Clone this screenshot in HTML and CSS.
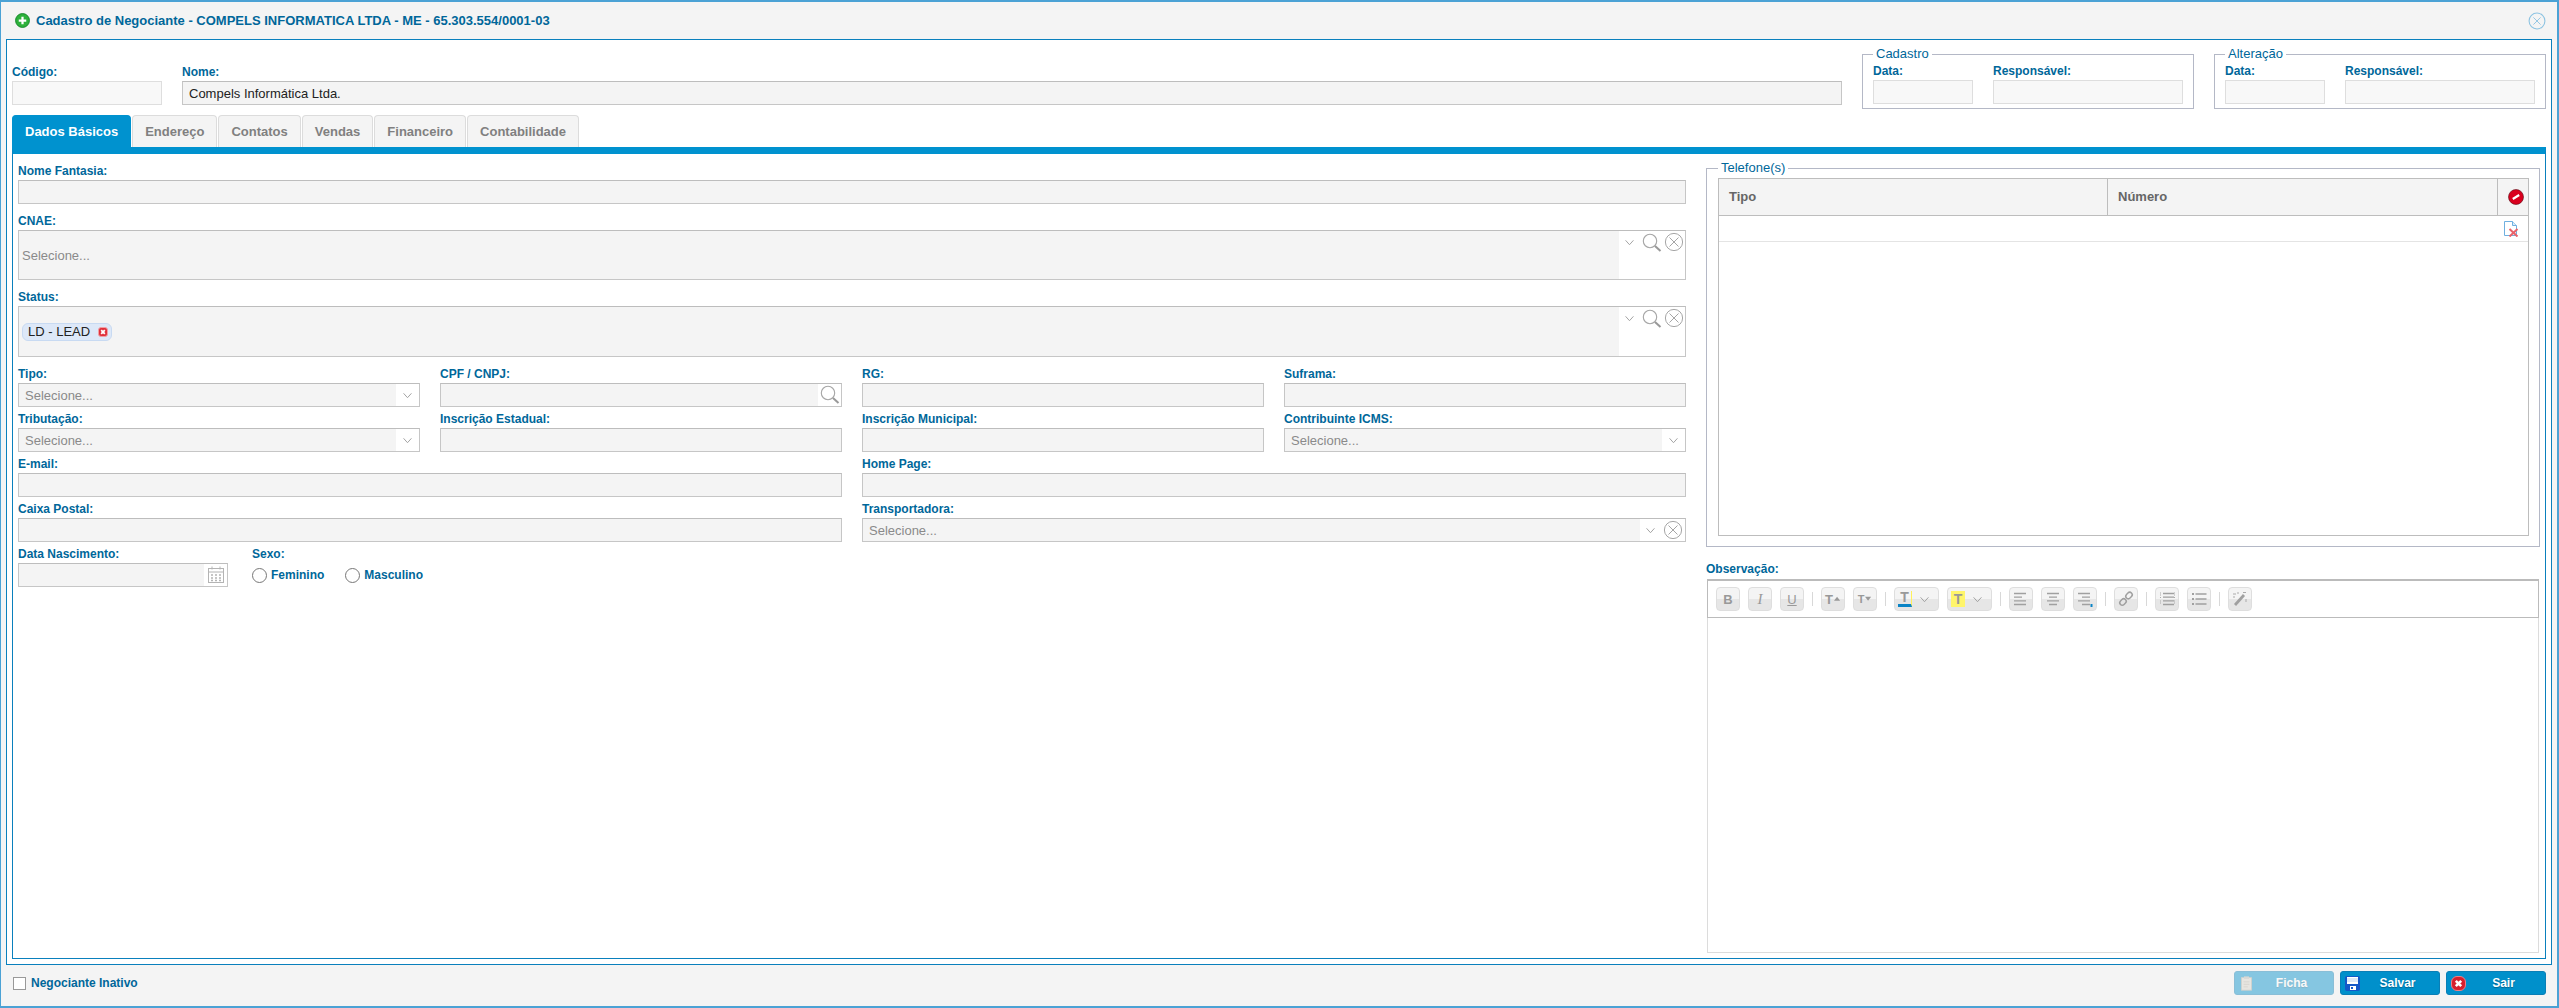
FILE: index.html
```html
<!DOCTYPE html>
<html lang="pt-BR">
<head>
  <meta charset="UTF-8">
  <meta name="viewport" content="width=device-width, initial-scale=1.0">
  <title>Cadastro de Negociante</title>
  <link rel="stylesheet" href="styles.css">
</head>
<body>
  <svg class="sprite" width="0" height="0">
    <symbol id="seta" viewBox="0 0 12 8"><path d="M1.500 1.500 6 6.500l4.500-5" fill="none" stroke="#a0a0a0" stroke-width="1.100"/></symbol>
    <symbol id="lupa" viewBox="0 0 20 20"><circle cx="8" cy="8" r="6.700" fill="none" stroke="#a6a6a6" stroke-width="1.100"/><path d="m13 13 5.500 5" stroke="#999" stroke-width="2"/></symbol>
    <symbol id="fechar" viewBox="0 0 20 20"><circle cx="10" cy="10" r="8.600" fill="none" stroke="#a6a6a6" stroke-width="1"/><path d="m5.500 5.500 9 9m0-9-9 9" stroke="#a6a6a6" stroke-width="1"/></symbol>
    <symbol id="parar" viewBox="0 0 16 16"><circle cx="8" cy="8" r="7.500" fill="#d9001e" stroke="#5c0a14" stroke-width=".6"/><path d="m4.800 10 6.400-4" stroke="#fff" stroke-width="2.200"/></symbol>
    <symbol id="sair" viewBox="0 0 15 15"><rect x=".5" y=".5" width="14" height="14" rx="5.500" fill="#d5202e" stroke="#ef7f86"/><path d="m4.800 4.800 5.400 5.400m0-5.400-5.400 5.400" stroke="#fff" stroke-width="2.600"/></symbol>
  </svg>

  <div class="janela">
    <div class="titulo">
      <svg class="icone-titulo" viewBox="0 0 16 16"><circle cx="8" cy="8" r="7.400" fill="#2db13a" stroke="#14862a"/><path d="M8 4v8M4 8h8" stroke="#fff" stroke-width="2.400"/></svg>
      <span>Cadastro de Negociante - COMPELS INFORMATICA LTDA - ME - 65.303.554/0001-03</span>
      <svg class="fechar-janela" viewBox="0 0 20 20"><circle cx="10" cy="10" r="8.800" fill="none" stroke="#8cc3e2" stroke-width="1.200"/><path d="m6 6 8 8m0-8-8 8" stroke="#8cc3e2" stroke-width="1"/></svg>
    </div>

    <div class="conteudo">
      <div class="topo">
        <div class="campo codigo">
          <label class="rotulo">Código:</label>
          <div class="entrada vazia"></div>
        </div>
        <div class="campo nome">
          <label class="rotulo">Nome:</label>
          <div class="entrada"><span class="valor">Compels Informática Ltda.</span></div>
        </div>
        <fieldset class="grupo auditoria">
          <legend>Cadastro</legend>
          <div class="campo data"><label class="rotulo">Data:</label><div class="entrada vazia"></div></div>
          <div class="campo responsavel"><label class="rotulo">Responsável:</label><div class="entrada vazia"></div></div>
        </fieldset>
        <fieldset class="grupo auditoria">
          <legend>Alteração</legend>
          <div class="campo data"><label class="rotulo">Data:</label><div class="entrada vazia"></div></div>
          <div class="campo responsavel"><label class="rotulo">Responsável:</label><div class="entrada vazia"></div></div>
        </fieldset>
      </div>

      <div class="abas">
        <div class="aba ativa">Dados Básicos</div>
        <div class="aba">Endereço</div>
        <div class="aba">Contatos</div>
        <div class="aba">Vendas</div>
        <div class="aba">Financeiro</div>
        <div class="aba">Contabilidade</div>
      </div>

      <div class="painel">
        <div class="coluna-esq">
          <div class="campo largo">
            <label class="rotulo">Nome Fantasia:</label>
            <div class="entrada"></div>
          </div>
          <div class="campo largo">
            <label class="rotulo">CNAE:</label>
            <div class="entrada multipla">
              <span class="valor placeholder">Selecione...</span>
              <span class="botoes">
                <svg class="ic-seta"><use href="#seta"/></svg>
                <svg class="ic-lupa"><use href="#lupa"/></svg>
                <svg class="ic-fechar"><use href="#fechar"/></svg>
              </span>
            </div>
          </div>
          <div class="campo largo">
            <label class="rotulo">Status:</label>
            <div class="entrada multipla status">
              <span class="etiqueta">LD - LEAD
                <svg class="etiqueta-x" viewBox="0 0 10 10"><rect x=".5" y=".5" width="9" height="9" rx="2.500" fill="#e0303c" stroke="#f0a0a4"/><path d="m3.200 3.200 3.600 3.600m0-3.600-3.600 3.600" stroke="#fff" stroke-width="1.800"/></svg>
              </span>
              <span class="botoes">
                <svg class="ic-seta"><use href="#seta"/></svg>
                <svg class="ic-lupa"><use href="#lupa"/></svg>
                <svg class="ic-fechar"><use href="#fechar"/></svg>
              </span>
            </div>
          </div>

          <div class="grade">
            <div class="campo">
              <label class="rotulo">Tipo:</label>
              <div class="entrada"><span class="valor placeholder recuo">Selecione...</span><span class="botoes uma"><svg class="ic-seta"><use href="#seta"/></svg></span></div>
            </div>
            <div class="campo">
              <label class="rotulo">CPF / CNPJ:</label>
              <div class="entrada"><span class="valor"></span><span class="botoes uma"><svg class="ic-lupa"><use href="#lupa"/></svg></span></div>
            </div>
            <div class="campo">
              <label class="rotulo">RG:</label>
              <div class="entrada"></div>
            </div>
            <div class="campo">
              <label class="rotulo">Suframa:</label>
              <div class="entrada"></div>
            </div>

            <div class="campo">
              <label class="rotulo">Tributação:</label>
              <div class="entrada"><span class="valor placeholder recuo">Selecione...</span><span class="botoes uma"><svg class="ic-seta"><use href="#seta"/></svg></span></div>
            </div>
            <div class="campo">
              <label class="rotulo">Inscrição Estadual:</label>
              <div class="entrada"></div>
            </div>
            <div class="campo">
              <label class="rotulo">Inscrição Municipal:</label>
              <div class="entrada"></div>
            </div>
            <div class="campo">
              <label class="rotulo">Contribuinte ICMS:</label>
              <div class="entrada"><span class="valor placeholder recuo">Selecione...</span><span class="botoes uma"><svg class="ic-seta"><use href="#seta"/></svg></span></div>
            </div>

            <div class="campo dupla">
              <label class="rotulo">E-mail:</label>
              <div class="entrada"></div>
            </div>
            <div class="campo dupla">
              <label class="rotulo">Home Page:</label>
              <div class="entrada"></div>
            </div>

            <div class="campo dupla">
              <label class="rotulo">Caixa Postal:</label>
              <div class="entrada"></div>
            </div>
            <div class="campo dupla">
              <label class="rotulo">Transportadora:</label>
              <div class="entrada"><span class="valor placeholder recuo">Selecione...</span><span class="botoes duas"><svg class="ic-seta"><use href="#seta"/></svg><svg class="ic-fechar"><use href="#fechar"/></svg></span></div>
            </div>
          </div>

          <div class="linha-final">
            <div class="campo nascimento">
              <label class="rotulo">Data Nascimento:</label>
              <div class="entrada">
                <span class="valor"></span>
                <span class="botoes uma">
                  <svg class="ic-calendario" viewBox="0 0 18 18" fill="none" stroke="#b4b4b4"><rect x="1.500" y="2.500" width="15" height="14"/><path d="M1.500 6h15M5 .5v3M13 .5v3"/><path d="M4 9h2M8 9h2M12 9h2M4 12h2M8 12h2M12 12h2M4 14.500h2M8 14.500h2M12 14.500h2" stroke-width="1.500"/></svg>
                </span>
              </div>
            </div>
            <div class="campo sexo">
              <label class="rotulo">Sexo:</label>
              <div class="opcoes">
                <label class="opcao"><input type="radio" name="sexo">Feminino</label>
                <label class="opcao"><input type="radio" name="sexo">Masculino</label>
              </div>
            </div>
          </div>
        </div>

        <div class="coluna-dir">
          <fieldset class="grupo telefones">
            <legend>Telefone(s)</legend>
            <div class="tabela">
              <div class="tabela-cab">
                <div class="col-tipo">Tipo</div>
                <div class="col-numero">Número</div>
                <div class="col-acao"><svg class="ic-parar"><use href="#parar"/></svg></div>
              </div>
              <div class="tabela-linha">
                <svg class="ic-doc" viewBox="0 0 16 16"><path d="M1.500 .5h8l4 4v10h-12z" fill="#fff" stroke="#6fb0e0"/><path d="M9.500 .5v4h4" fill="#d8ecfa" stroke="#6fb0e0"/><path d="m6.500 8 8 7.500m0-7.500-8 7.500" stroke="#e8626a" stroke-width="2"/></svg>
              </div>
            </div>
          </fieldset>

          <label class="rotulo obs">Observação:</label>
          <div class="editor">
            <div class="barra">
              <span class="bt"><b>B</b></span>
              <span class="bt"><i class="serifa">I</i></span>
              <span class="bt"><u>U</u></span>
              <span class="sep"></span>
              <span class="bt"><b>T</b><svg class="mini" viewBox="0 0 8 6"><path d="M0 5h7L3.500 .5z" fill="#999"/></svg></span>
              <span class="bt"><b class="menor">T</b><svg class="mini" viewBox="0 0 8 6"><path d="M0 .5h7L3.500 5z" fill="#999"/></svg></span>
              <span class="sep"></span>
              <span class="bt duplo"><span class="cor-texto"><b>T</b></span><svg class="ic-seta"><use href="#seta"/></svg></span>
              <span class="bt duplo"><span class="cor-fundo"><b>T</b></span><svg class="ic-seta"><use href="#seta"/></svg></span>
              <span class="sep"></span>
              <span class="bt"><svg class="ic-barra" viewBox="0 0 14 14"><path d="M0 1.500h12M0 5.200h8M0 8.900h12M0 12.500h12" stroke="#a0a0a0" stroke-width="1.300"/></svg></span>
              <span class="bt"><svg class="ic-barra" viewBox="0 0 14 14"><path d="M1 1.500h12M3 5.200h8M1 8.900h12M3 12.500h8" stroke="#a0a0a0" stroke-width="1.300"/></svg></span>
              <span class="bt"><svg class="ic-barra" viewBox="0 0 14 14"><path d="M0 1.500h12M4 5.200h8M0 8.900h12M4 12.500h8" stroke="#a0a0a0" stroke-width="1.300"/><path d="M12.500 12h2v3h-2z" fill="#0a84c6"/></svg></span>
              <span class="sep"></span>
              <span class="bt"><svg class="ic-barra" viewBox="0 0 14 14" fill="none" stroke="#a0a0a0" stroke-width="1.500"><rect x="6.500" y="1" width="7" height="5" rx="2.500" transform="rotate(-45 10 3.500)"/><rect x=".5" y="7.500" width="7" height="5" rx="2.500" transform="rotate(-45 4 10)"/></svg></span>
              <span class="sep"></span>
              <span class="bt"><svg class="ic-lista" viewBox="0 0 15 14"><path d="M3 1.500h11M3 5.200h11M3 8.900h11M3 12.500h11" stroke="#a0a0a0" stroke-width="1.300"/><path d="M.5 .5v3M.5 5v2M.5 8.500v4M14.500 .5v3M14.500 5v2M14.500 8.500v4" stroke="#aaa" stroke-dasharray="1 1"/></svg></span>
              <span class="bt"><svg class="ic-lista" viewBox="0 0 15 14"><path d="M3.500 2h11M3.500 7h11M3.500 12h11" stroke="#a0a0a0" stroke-width="1.300"/><path d="M0 1h2v2H0zM0 6h2v2H0zM0 11h2v2H0z" fill="#a0a0a0"/></svg></span>
              <span class="sep"></span>
              <span class="bt"><svg class="ic-lista" viewBox="0 0 15 14"><path d="m2 13 9-10" stroke="#a0a0a0" stroke-width="2.800"/><path d="M0 2h3M5 0v2M10 .5h3M0 5h2M13 7v3" stroke="#aaa"/></svg></span>
            </div>
          </div>
        </div>
      </div>
    </div>

    <div class="rodape">
      <label class="inativo"><input type="checkbox">Negociante Inativo</label>
      <div class="acoes">
        <button class="botao desabilitado" type="button">
          <svg viewBox="0 0 14 18"><rect x="1" y="2" width="12" height="15" fill="#d8d4c8" stroke="#a8a89c"/><rect x="4" y=".5" width="6" height="3" fill="#b8b8b0"/><path d="M3.500 7h7M3.500 10h7M3.500 13h5" stroke="#b0aca0"/></svg>
          <span>Ficha</span>
        </button>
        <button class="botao" type="button">
          <svg viewBox="0 0 15 15"><rect width="15" height="15" rx="2" fill="#1458c8"/><rect x="2" y="1" width="11" height="7" fill="#fff"/><path d="M2 3h11M2 5h11" stroke="#bcd0ee"/><rect x="5" y="10" width="6" height="4" fill="#fff"/><rect x="6" y="11" width="2" height="2" fill="#1458c8"/></svg>
          <span>Salvar</span>
        </button>
        <button class="botao" type="button">
          <svg><use href="#sair"/></svg>
          <span>Sair</span>
        </button>
      </div>
    </div>
  </div>
</body>
</html>
```

FILE: styles.css
```css
* {
  box-sizing: border-box;
}

body {
  margin: 0;
  padding: 0;
  background: white;
  font-family: "Liberation Sans", Arial, sans-serif;
  font-size: 12px;
  overflow: hidden;
}

.sprite {
  position: absolute;
}

.janela {
  display: flex;
  flex-direction: column;
  height: 100vh;
  background: #f4f4f4;
  border: 2px solid #4ba2d5;
  border-left-width: 1px;
}

.titulo {
  display: flex;
  align-items: center;
  height: 37px;
  padding: 0 11px 0 14px;
  color: #00679a;
  font-size: 13px;
  font-weight: bold;
}

.icone-titulo {
  width: 15px;
  height: 15px;
  margin-right: 6px;
}

.fechar-janela {
  width: 18px;
  height: 18px;
  margin-left: auto;
}

.conteudo {
  flex: 1;
  display: flex;
  flex-direction: column;
  margin: 0 5px;
  padding: 0 5px 5px;
  background: white;
  border: 1px solid #0a80bd;
}

/* topo */
.topo {
  display: flex;
  align-items: flex-start;
  gap: 20px;
  height: 75px;
}

.rotulo {
  display: block;
  height: 16px;
  line-height: 15px;
  color: #00679a;
  font-weight: bold;
}

.campo {
  min-width: 0;
}

.codigo {
  width: 150px;
  margin-top: 25px;
}

.nome {
  flex: 1;
  margin-top: 25px;
}

.entrada {
  display: flex;
  align-items: center;
  height: 24px;
  background: #f4f4f4;
  border: 1px solid #c6c6c6;
  border-top-color: #bdbdbd;
}

.entrada.vazia {
  background: #f8f8f8;
  border-color: #dedede;
}

.valor {
  flex: 1;
  padding-left: 6px;
  color: #222;
  font-size: 13px;
}

.placeholder {
  padding-left: 3px;
  color: #8a8a8a;
}

.placeholder.recuo {
  padding-left: 6px;
}

.grupo {
  min-width: 0;
  margin: 0;
  background: white;
  border: 1px solid #b4b8c6;
}

.grupo legend {
  height: 14px;
  padding: 0 3px;
  line-height: 14px;
  color: #00679a;
  font-size: 13px;
}

.auditoria {
  display: flex;
  gap: 20px;
  width: 332px;
  margin-top: 7px;
  padding: 3px 10px 4px;
}

.data {
  width: 100px;
}

.responsavel {
  width: 190px;
}

/* abas */
.abas {
  display: flex;
  gap: 1px;
  height: 32px;
}

.aba {
  padding: 0 12px;
  line-height: 32px;
  color: #808080;
  font-size: 13px;
  font-weight: bold;
  background: #f4f4f4;
  border: 1px solid #dcdcdc;
  border-bottom: none;
  border-radius: 4px 4px 0 0;
}

.aba.ativa {
  color: white;
  background: #0092cf;
  border-color: #0092cf;
}

.painel {
  flex: 1;
  display: flex;
  gap: 20px;
  padding: 0 5px 5px;
  border: 1px solid #0a80bd;
  border-top: 7px solid #0092cf;
}

/* coluna da esquerda */
.coluna-esq {
  width: 1668px;
  padding-top: 10px;
}

.largo {
  margin-bottom: 10px;
}

.multipla {
  height: 50px;
}

.multipla.status {
  height: 51px;
}

.botoes {
  display: flex;
  align-self: stretch;
  align-items: center;
  justify-content: flex-end;
  background: white;
  flex: none;
}

.multipla .botoes {
  width: 66px;
  align-items: flex-start;
  padding-top: 2px;
  padding-right: 1px;
}

.uma {
  width: 23px;
  justify-content: center;
}

.duas {
  justify-content: flex-start;
  width: 45px;
  gap: 5px;
  padding-left: 5px;
}

.ic-seta {
  width: 11px;
  height: 7px;
}

.multipla .ic-seta {
  margin: 6px auto 0 5px;
}

.ic-lupa {
  width: 20px;
  height: 20px;
}

.ic-fechar {
  width: 20px;
  height: 20px;
  margin-left: 2px;
}

.multipla .ic-fechar {
  margin-top: -1px;
}

.ic-calendario {
  width: 18px;
  height: 18px;
}

.etiqueta {
  display: flex;
  align-items: center;
  justify-content: space-between;
  width: 90px;
  height: 18px;
  margin-left: 3px;
  margin-right: auto;
  padding: 0 3px 0 5px;
  color: #222;
  font-size: 13px;
  background: #dde8f8;
  border: 1px solid #c8daf2;
  border-radius: 6px;
}

.etiqueta-x {
  width: 10px;
  height: 10px;
}

.grade {
  display: grid;
  grid-template-columns: repeat(4, 1fr);
  gap: 5px 20px;
  margin-bottom: 5px;
}

.dupla {
  grid-column: span 2;
}

.linha-final {
  display: flex;
  gap: 24px;
}

.nascimento {
  width: 210px;
}

.opcoes {
  display: flex;
  gap: 21px;
  height: 24px;
  align-items: center;
}

.opcao {
  display: flex;
  align-items: center;
  gap: 4px;
  color: #00679a;
  font-weight: bold;
}

.opcao input {
  appearance: none;
  width: 15px;
  height: 15px;
  margin: 0;
  background: white;
  border: 1px solid #777;
  border-radius: 50%;
}

/* coluna da direita */
.coluna-dir {
  flex: 1;
  display: flex;
  flex-direction: column;
  padding-top: 7px;
}

.telefones {
  height: 386px;
  padding: 3px 10px 0 11px;
}

.tabela {
  height: 358px;
  border: 1px solid #bdbdbd;
}

.tabela-cab {
  display: flex;
  height: 37px;
  color: #666;
  font-size: 13px;
  font-weight: bold;
  line-height: 36px;
  background: #f4f4f4;
  border-bottom: 1px solid #bdbdbd;
}

.col-tipo,
.col-numero {
  padding-left: 10px;
  border-right: 1px solid #bdbdbd;
}

.col-tipo {
  width: 389px;
}

.col-numero {
  width: 390px;
}

.col-acao {
  flex: 1;
  display: flex;
  align-items: center;
  justify-content: center;
  padding-left: 6px;
}

.ic-parar {
  width: 16px;
  height: 16px;
}

.tabela-linha {
  display: flex;
  align-items: center;
  justify-content: flex-end;
  height: 26px;
  padding-right: 9px;
  border-bottom: 1px solid #e4e4e4;
}

.ic-doc {
  width: 16px;
  height: 16px;
}

.rotulo.obs {
  margin-top: 15px;
}

.editor {
  flex: 1;
  margin: 1px 1px 0;
  border: 1px solid #dcdcdc;
}

.barra {
  display: flex;
  align-items: center;
  gap: 8px;
  height: 39px;
  margin: -1px -1px 0;
  padding: 0 8px;
  background: white;
  border: 1px solid #bbb;
  border-top-width: 2px;
}

.bt {
  display: flex;
  align-items: center;
  justify-content: center;
  width: 24px;
  height: 24px;
  color: #999;
  font-size: 13px;
  background: linear-gradient(#f4f4f4 50%, #e6e6e6 50%);
  border: 1px solid #dedede;
  border-radius: 4px;
}

.bt.duplo {
  justify-content: space-between;
  width: 45px;
  padding: 0 8px 0 3px;
}

.serifa {
  font-family: "Liberation Serif", serif;
  font-size: 15px;
}

.menor {
  font-size: 11px;
}

.mini {
  width: 7px;
  height: 6px;
  margin-left: 1px;
}

.cor-texto,
.cor-fundo {
  display: block;
  width: 14px;
  height: 16px;
  font-size: 14px;
  text-align: center;
}

.cor-texto {
  line-height: 13px;
  border-bottom: 3px solid #0a84c6;
  border-right: 1px solid #fff25a;
}

.cor-fundo {
  line-height: 16px;
  background: #fff56b;
}

.ic-barra,
.ic-lista {
  overflow: visible;
  width: 14px;
  height: 14px;
}

.ic-lista {
  width: 15px;
}

.sep {
  width: 1px;
  height: 14px;
  background: #d8d8d8;
}

/* rodapé */
.rodape {
  display: flex;
  align-items: flex-start;
  justify-content: space-between;
  height: 41px;
  padding: 6px 11px 0 12px;
}

.inativo {
  display: flex;
  align-items: center;
  gap: 5px;
  height: 24px;
  color: #00679a;
  font-weight: bold;
}

.inativo input {
  appearance: none;
  width: 13px;
  height: 13px;
  margin: 0;
  background: white;
  border: 1px solid #999;
}

.acoes {
  display: flex;
  gap: 6px;
}

.botao {
  display: flex;
  align-items: center;
  width: 100px;
  height: 24px;
  padding: 0 4px;
  color: white;
  font-family: inherit;
  font-size: 12px;
  font-weight: bold;
  background: #0090cb;
  border: 1px solid #0a7fb6;
  border-radius: 3px;
}

.botao svg {
  flex: none;
  width: 15px;
  height: 15px;
}

.botao span {
  flex: 1;
  text-align: center;
  text-shadow: 0 1px 1px rgba(0, 0, 0, 0.3);
}

.botao.desabilitado {
  opacity: 0.45;
}
```
